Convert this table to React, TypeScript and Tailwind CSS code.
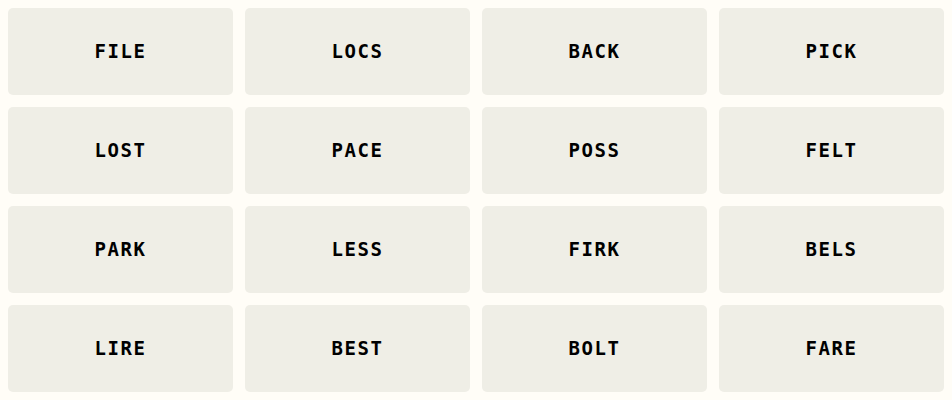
const words = [
  'FILE', 'LOCS', 'BACK', 'PICK',
  'LOST', 'PACE', 'POSS', 'FELT',
  'PARK', 'LESS', 'FIRK', 'BELS',
  'LIRE', 'BEST', 'BOLT', 'FARE',
];

export default function App() {
  return (
    <div className="min-h-[400px] w-[952px] bg-[#fffdf7] p-2">
      <div className="grid grid-cols-4 gap-3">
        {words.map((w) => (
          <button
            key={w}
            className="flex h-[87px] items-center justify-center rounded-[5px] bg-[#efeee6] font-['DejaVu_Sans_Mono',monospace] text-[19px] font-bold tracking-[1.5px] text-black"
          >
            {w}
          </button>
        ))}
      </div>
    </div>
  );
}
